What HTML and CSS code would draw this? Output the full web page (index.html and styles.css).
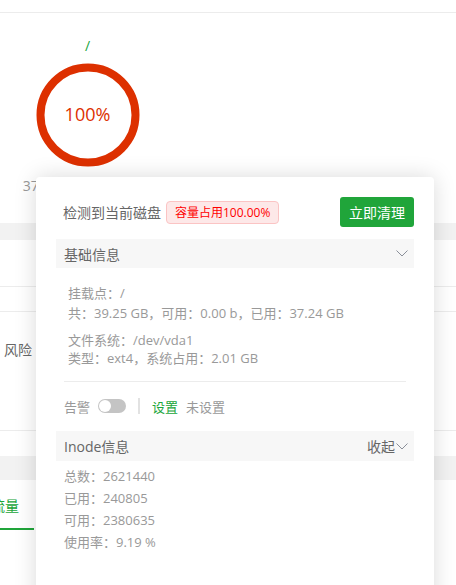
FILE: index.html
```html
<!DOCTYPE html>
<html lang="zh-CN">
<head>
<meta charset="utf-8">
<link rel="stylesheet" href="styles.css">
</head>
<body>
<div class="page">
  <div class="topbar"></div>
  <div class="disk-col">
    <div class="mount">/</div>
    <div class="gauge">
      <svg class="ring" width="104" height="104" viewBox="0 0 104 104"><circle cx="52" cy="52" r="47.5" fill="none" stroke="#dd3000" stroke-width="8"/></svg>
      <span class="pct">100%</span>
    </div>
    <div class="usage">37.24 GB / 39.25 GB</div>
  </div>
  <div class="band"></div>
  <div class="row row-a"></div>
  <div class="row row-b"></div>
  <div class="row row-c"><span class="risk">风险</span></div>
  <div class="band band-2"></div>
  <div class="tabs"><span class="tab">流量</span></div>

  <div class="pop">
    <div class="pop-head">
      <div class="detect">检测到当前磁盘<span class="badge">容量占用100.00%</span></div>
      <button class="btn">立即清理</button>
    </div>
    <div class="sec-title">
      <span>基础信息</span>
      <svg class="chev" width="12" height="7" viewBox="0 0 12 7"><path d="M0.5 0.5 L6 6 L11.5 0.5" fill="none" stroke="#8a8f99" stroke-width="1"/></svg>
    </div>
    <div class="info">
      <div class="blk blk-1">
        <div>挂载点：/</div>
        <div>共：39.25 GB，可用：0.00 b，已用：37.24 GB</div>
      </div>
      <div class="blk blk-2">
        <div>文件系统：/dev/vda1</div>
        <div>类型：ext4，系统占用：2.01 GB</div>
      </div>
    </div>
    <div class="divider"></div>
    <div class="alarm">
      <span>告警</span>
      <span class="switch"><span class="knob"></span></span>
      <span class="sep"></span>
      <span class="set">设置</span>
      <span class="unset">未设置</span>
    </div>
    <div class="sec-title sec-inode">
      <span>Inode信息</span>
      <span class="fold">收起<svg class="chev" width="12" height="7" viewBox="0 0 12 7"><path d="M0.5 0.5 L6 6 L11.5 0.5" fill="none" stroke="#8a8f99" stroke-width="1"/></svg></span>
    </div>
    <div class="inode">
      <div>总数：2621440</div>
      <div>已用：240805</div>
      <div>可用：2380635</div>
      <div>使用率：9.19 %</div>
    </div>
  </div>
</div>
</body>
</html>
```
FILE: styles.css
```css
* { box-sizing: border-box; }
html, body { margin: 0; padding: 0; background: #fff; }
body {
  font-family: "Open Sans", "Noto Sans CJK SC", sans-serif;
  font-size: 14px;
  color: #666;
  width: 456px;
  height: 585px;
  overflow: hidden;
}
.page { position: relative; width: 456px; height: 585px; overflow: hidden; }
.topbar { height: 13px; border-bottom: 1px solid #ececec; }
.disk-col {
  width: 175px;
  display: flex;
  flex-direction: column;
  align-items: center;
  padding-top: 23px;
}
.mount { height: 20px; line-height: 20px; color: #20a53a; font-size: 14px; }
.gauge {
  margin-top: 7px;
  width: 104px;
  height: 104px;
  display: flex;
  align-items: center;
  justify-content: center;
  position: relative;
}
.ring { position: absolute; left: 0; top: 0; }
.pct { color: #dd3000; font-size: 18px; position: relative; margin-top: -3px; }
.usage { margin-top: 9px; height: 20px; line-height: 20px; color: #999; font-size: 14px; white-space: nowrap; }
.band { margin-top: 27px; height: 17px; background: #f2f2f2; }
.row { border-bottom: 1px solid #ececec; }
.row-a { height: 47px; }
.row-b { height: 25px; }
.row-c { height: 119px; padding-top: 28px; }
.risk { display: block; margin-left: 4px; line-height: 20px; color: #666; font-size: 14px; white-space: nowrap; }
.band-2 { margin-top: 25px; height: 24px; }
.tabs { display: flex; height: 50px; padding-top: 16px; }
.tab {
  margin-left: -9px;
  padding-right: 15px;
  line-height: 20px;
  height: 34px;
  color: #20a53a;
  border-bottom: 2px solid #20a53a;
  white-space: nowrap;
}

.pop {
  position: absolute;
  left: 36px;
  top: 177px;
  width: 398px;
  height: 440px;
  background: #fff;
  border-radius: 4px;
  box-shadow: 0 0 22px rgba(0, 0, 0, 0.15);
  padding: 20px 20px 0;
}
.pop-head {
  height: 30px;
  display: flex;
  align-items: center;
  justify-content: space-between;
}
.detect { display: flex; align-items: center; padding-left: 7px; color: #666; font-size: 14px; }
.badge {
  margin-left: 5px;
  height: 23px;
  line-height: 21px;
  padding: 0 8px;
  border: 1px solid #fbc4c4;
  background: #fde8e8;
  color: #f00;
  font-size: 12px;
  border-radius: 4px;
}
.btn {
  height: 30px;
  width: 74px;
  border: 0;
  border-radius: 3px;
  background: #20a53a;
  color: #fff;
  font-family: inherit;
  font-size: 14px;
  padding: 0;
}
.sec-title {
  margin-top: 12px;
  height: 29px;
  background: #f7f7f7;
  padding: 0 8px;
  display: flex;
  align-items: center;
  justify-content: space-between;
  color: #666;
  font-size: 14px;
}
.chev { display: block; margin-right: -2px; }
.fold { display: flex; align-items: center; gap: 1px; }
.info { padding: 15px 12px 0; font-size: 13px; color: #999; }
.blk-1 div { line-height: 20px; }
.blk-2 { margin-top: 8px; }
.blk-2 div { line-height: 18px; }
.divider { margin: 14px 8px 0; border-top: 1px solid #ececec; }
.alarm {
  height: 24px;
  margin-top: 12px;
  padding-left: 8px;
  display: flex;
  align-items: center;
  font-size: 13px;
  color: #999;
}
.switch {
  margin-left: 8px;
  width: 28px;
  height: 14px;
  border-radius: 7px;
  background: #c4c4c4;
  display: flex;
  align-items: center;
  padding-left: 1px;
}
.knob { width: 12px; height: 12px; border-radius: 50%; background: #fff; }
.sep { margin: 0 12px 0 12px; width: 2px; height: 16px; background: #e2e2e2; }
.set { color: #20a53a; }
.unset { margin-left: 8px; color: #999; }
.sec-inode { margin-top: 13px; height: 30px; }
.inode { padding: 4px 8px 0; font-size: 13px; color: #999; }
.inode div { line-height: 22px; }
```
